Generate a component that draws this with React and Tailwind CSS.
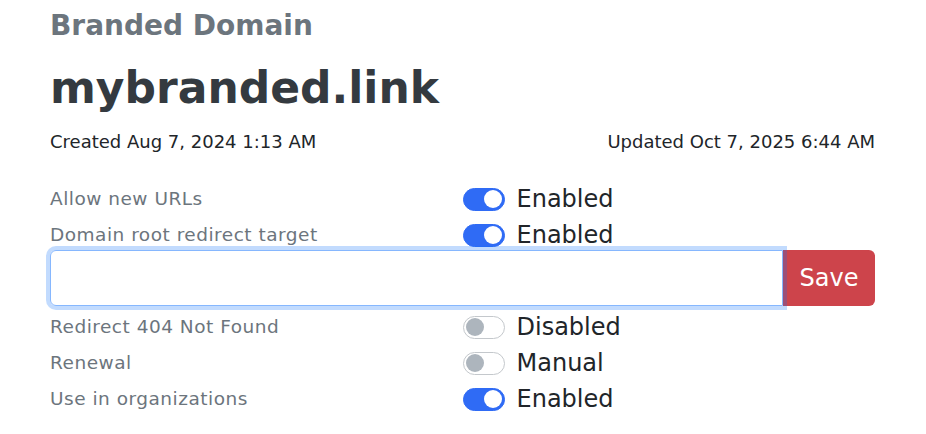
import { useState } from "react";

const font = { fontFamily: '"DejaVu Sans", "Liberation Sans", sans-serif' };

function Toggle({ on }) {
  return (
    <span
      className={`relative inline-block w-[42px] h-[23px] rounded-full shrink-0 border ${
        on ? "bg-[#2f6bf5] border-[#2f6bf5]" : "bg-white border-[#c4c8cc]"
      }`}
    >
      <span
        className={`absolute top-[1.5px] w-[18px] h-[18px] rounded-full ${
          on ? "right-[2px] bg-white" : "left-[2px] bg-[#adb5bd]"
        }`}
      />
    </span>
  );
}

function Row({ label, on, value }) {
  return (
    <div className="grid grid-cols-2 h-[36px] items-center">
      <div className="text-[18.5px] tracking-[0.5px] text-[#6c757d]">{label}</div>
      <div className="flex items-center gap-[12px]">
        <Toggle on={on} />
        <span className="text-[24px] text-[#212529]">{value}</span>
      </div>
    </div>
  );
}

export default function App() {
  const [target, setTarget] = useState("");

  return (
    <div className="bg-white min-h-[434px] pl-[50px] pr-[51px] pt-[8px]" style={font}>
      <h2 className="text-[28px] font-semibold text-[#6c757d] leading-[36px]">Branded Domain</h2>
      <h1 className="text-[44px] font-bold text-[#343a40] leading-[60px] mt-[14px]">mybranded.link</h1>
      <div className="flex justify-between text-[18px] text-[#212529] mt-[11px] leading-[26px]">
        <span>Created Aug 7, 2024 1:13 AM</span>
        <span>Updated Oct 7, 2025 6:44 AM</span>
      </div>

      <div className="mt-[26px]">
        <Row label="Allow new URLs" on value="Enabled" />
        <Row label="Domain root redirect target" on value="Enabled" />
        <div className="flex h-[56px] mt-[-3px]">
          <input
            value={target}
            onChange={(e) => setTarget(e.target.value)}
            className="relative z-10 flex-1 min-w-0 rounded-l-[6px] border border-[#86b7fe] ring-4 ring-[#0d6efd40] outline-none px-3 text-[18px]"
          />
          <button className="w-[92px] rounded-r-[6px] bg-[#cd444b] text-white text-[24px]">Save</button>
        </div>
        <div className="mt-[3px]">
          <Row label="Redirect 404 Not Found" value="Disabled" />
          <Row label="Renewal" value="Manual" />
          <Row label="Use in organizations" on value="Enabled" />
        </div>
      </div>
    </div>
  );
}
